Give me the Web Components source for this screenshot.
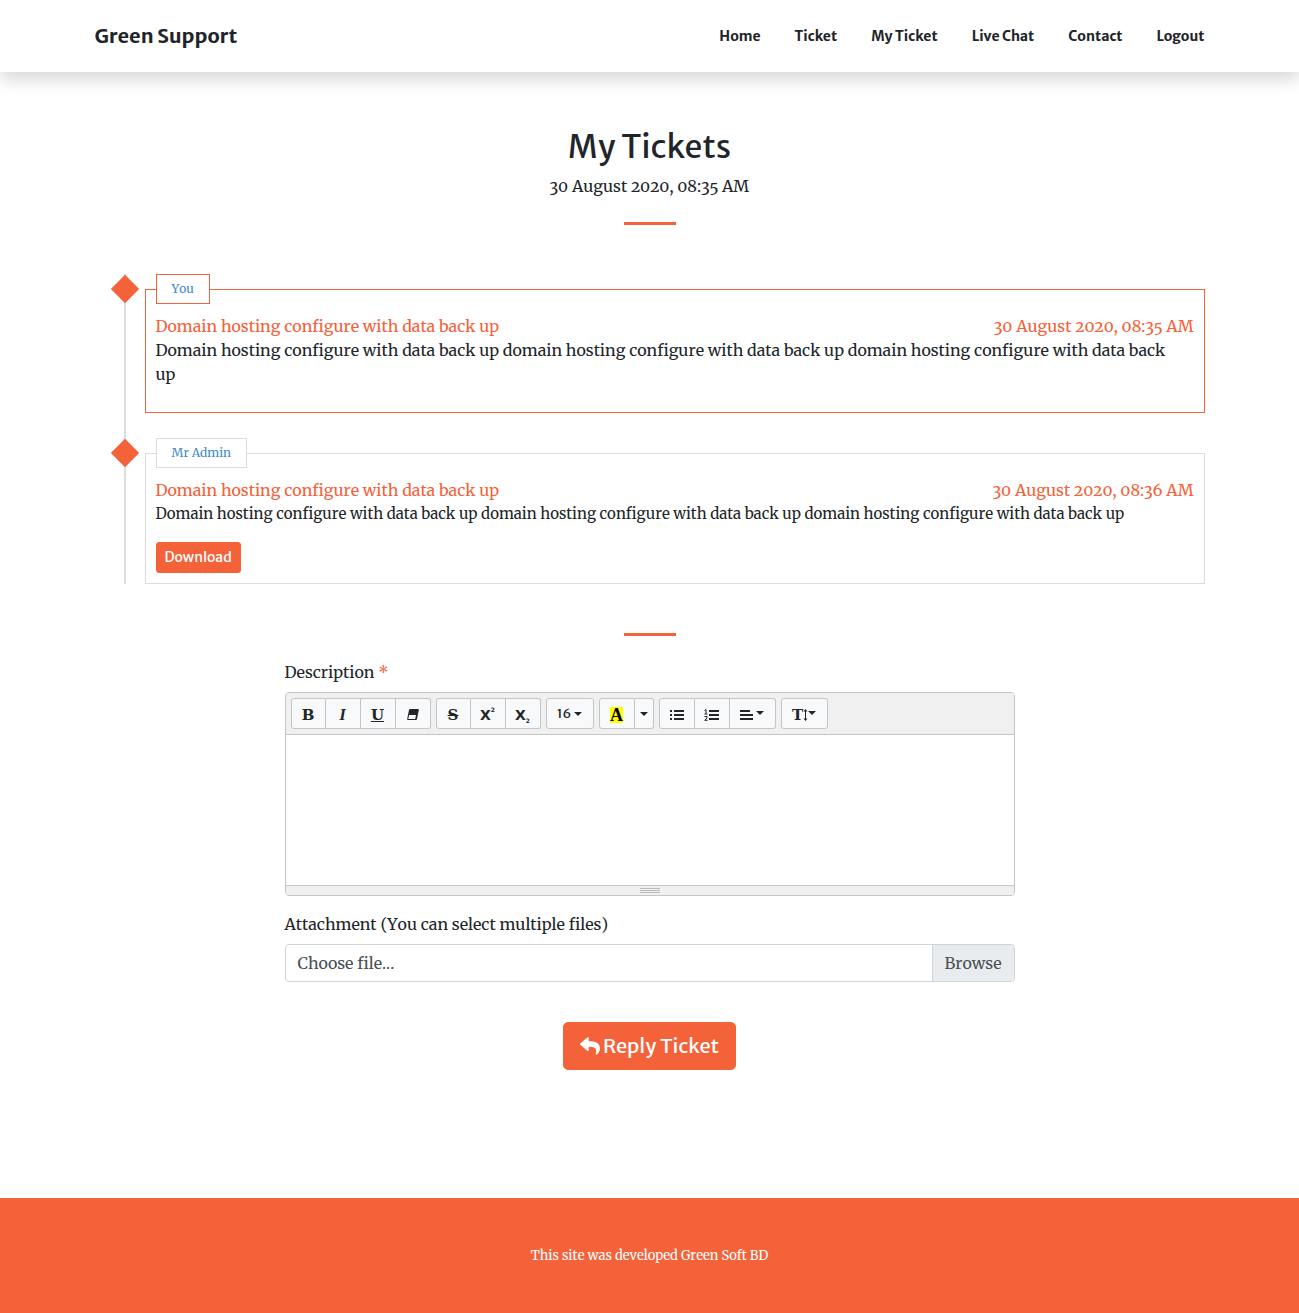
<!DOCTYPE html>
<html lang="en">
<head>
<meta charset="utf-8">
<meta name="viewport" content="width=device-width, initial-scale=1">
<title>My Tickets - Green Support</title>
<style>
:root{--accent:#f4623a;--ink:#212529;--line:#ddd;
--serif:Merriweather,"DejaVu Serif Condensed","DejaVu Serif",serif;
--sans:"Merriweather Sans","Noto Sans",sans-serif}
*{box-sizing:border-box}
body{margin:0;min-height:100vh;display:flex;flex-direction:column;background:#fff;color:var(--ink);font:16px/24px var(--serif);font-variant-numeric:oldstyle-nums;font-kerning:none}
main{flex:1;width:100%;max-width:1140px;margin:0 auto;padding:56px 15px 128px;display:flex;flex-direction:column}
</style>
</head>
<body>
<site-nav></site-nav>
<main>
  <page-heading><span slot="title">My Tickets</span>30 August 2020, 08:35 AM</page-heading>
  <accent-rule></accent-rule>
  <ticket-timeline>
    <ticket-message class="own">
      <span slot="author">You</span>
      <span slot="subject">Domain hosting configure with data back up</span>
      <span slot="date">30 August 2020, 08:35 AM</span>
      Domain hosting configure with data back up domain hosting configure with data back up domain hosting configure with data back up
    </ticket-message>
    <ticket-message class="small" download>
      <span slot="author">Mr Admin</span>
      <span slot="subject">Domain hosting configure with data back up</span>
      <span slot="date">30 August 2020, 08:36 AM</span>
      Domain hosting configure with data back up domain hosting configure with data back up domain hosting configure with data back up
    </ticket-message>
  </ticket-timeline>
  <accent-rule></accent-rule>
  <reply-form></reply-form>
</main>
<site-footer>This site was developed Green Soft BD</site-footer>
<script>
const define = (name, html, setup) => customElements.define(name, class extends HTMLElement {
  constructor() {
    super();
    this.attachShadow({mode: 'open'}).innerHTML = '<style>*{box-sizing:border-box}</style>' + html;
  }
  connectedCallback() { if (setup) setup(this, this.shadowRoot); }
});

define('site-nav', `<style>
:host{display:block;background:#fff;box-shadow:0 8px 16px rgba(0,0,0,.15);font-family:var(--sans);font-weight:700;font-kerning:auto}
nav{max-width:1140px;margin:0 auto;padding:0 15px;min-height:72px;display:flex;align-items:center;justify-content:space-between;gap:24px}
ul{display:flex;flex-wrap:wrap;gap:0 34px;list-style:none;margin:0;padding:0;font-size:14px}
a{color:var(--ink);text-decoration:none}
.brand{font-size:20px}
</style>
<nav><a class="brand" href="#">Green Support</a>
<ul><li><a href="#">Home</a></li><li><a href="#">Ticket</a></li><li><a href="#">My Ticket</a></li><li><a href="#">Live Chat</a></li><li><a href="#">Contact</a></li><li><a href="#">Logout</a></li></ul></nav>`);

define('page-heading', `<style>
:host{display:block;text-align:center}
h2{margin:0 0 8px;font:400 32px/38px var(--sans);font-kerning:auto}
p{margin:0}
</style><h2><slot name="title"></slot></h2><p><slot></slot></p>`);

define('accent-rule', `<style>
:host{display:block;margin:24px 0}
hr{width:52px;height:3px;border:0;margin:0 auto;background:var(--accent)}
</style><hr>`);

define('ticket-timeline', `<style>
:host{display:flex;flex-direction:column;gap:25px;margin:25px 0;background:linear-gradient(var(--line),var(--line)) 29px 0/2px 100% no-repeat}
</style><slot></slot>`);

define('ticket-message', `<style>
:host{display:grid;grid-template-columns:50px minmax(0,1fr);--edge:var(--line)}
:host(.own){--edge:var(--accent)}
.rail{height:30px;padding-left:10px;display:grid;place-items:center}
.rail i{width:20px;height:20px;background:var(--accent);transform:rotate(45deg)}
fieldset{min-width:0;margin:0;padding:10px;border:1px solid var(--edge)}
legend{padding:0 15px;border:1px solid var(--edge);background:#fff;color:#428bca;font-size:12px;line-height:28px}
header{display:flex;flex-wrap:wrap;justify-content:space-between;column-gap:20px;color:var(--accent)}
p{margin:0 0 16px;padding-right:10px}
:host(.small) p{font-size:15px}
button{display:block;height:31px;padding:0 8px 2px;border:1px solid var(--accent);border-radius:3px;background:var(--accent);color:#fff;font:14px/20px var(--sans)}
:host(:not([download])) button{display:none}
</style>
<div class="rail"><i></i></div>
<fieldset><legend><slot name="author"></slot></legend>
<header><slot name="subject"></slot><slot name="date"></slot></header>
<p><slot></slot></p><button type="button">Download</button></fieldset>`);

const caret = '<svg class="caret" width="8" height="4" viewBox="0 0 8 4"><path d="M0 0h8L4 4z"/></svg>';
define('rich-editor', `<style>
:host{display:block;border:1px solid #c5c5c5;border-radius:4px;overflow:hidden}
.bar{display:flex;flex-wrap:wrap;gap:5px;padding:5px;background:#f0f0f0;border-bottom:1px solid #c5c5c5}
.group{display:flex}
button{display:flex;align-items:center;justify-content:center;gap:3px;width:35px;height:31px;margin:0;padding:2px 0 0;border:1px solid #c5c5c5;border-left-width:0;background:#f8f9fa;color:var(--ink);font:700 15px/20px "DejaVu Serif",serif}
button:first-child{border-left-width:1px;border-radius:3px 0 0 3px}
button:last-child{border-radius:0 3px 3px 0}
button:only-child{border-radius:3px}
.group .first{width:36px}.group .drop{width:19px;padding:0}.group .wide{width:46px}
.group .tall{width:47px;gap:0}
.group .size{width:48px;padding:0;font:13px/20px var(--sans)}
em{font:italic 700 17px/20px "Liberation Serif",serif}
svg{fill:currentColor;display:block}
.x{font:700 14px/16px "DejaVu Sans",sans-serif;gap:0}
.x small{font-size:6px;line-height:8px;align-self:flex-start;padding-top:5px}
.x small.sub{align-self:flex-end;padding:0 0 3px}
.mark{background:#ff0;color:#000;font:700 18px/16px "Liberation Serif",serif}
.wide .caret,.tall .caret{margin-bottom:4px}
textarea{display:block;width:100%;height:150px;border:0;padding:10px;resize:none;outline:0;background:#fff;font:inherit}
.grip{height:10px;background:#f0f0f0;border-top:1px solid #c5c5c5;display:flex;flex-direction:column;align-items:center;gap:1px;padding-top:2px}
.grip i{width:20px;height:1px;background:#bbb}
</style>
<div class="bar">
<div class="group"><button type="button">B</button><button type="button"><em>I</em></button><button type="button"><u>U</u></button>
<button type="button" aria-label="Clear formatting"><svg width="12" height="11" viewBox="0 0 12 11"><path fill-rule="evenodd" d="M3.500 0H11q1 0 .8 1L10 10q-.2 1-1.200 1H1Q0 11 .2 10L2 1Q2.300 0 3.500 0zM2.100 6L1.300 10h6.900L9 6z"/></svg></button></div>
<div class="group"><button type="button"><s>S</s></button><button type="button" class="x">X<small>2</small></button><button type="button" class="x">X<small class="sub">2</small></button></div>
<div class="group"><button type="button" class="size">16 ${caret}</button></div>
<div class="group"><button type="button" class="first"><span class="mark">A</span></button><button type="button" class="drop" aria-label="More colors">${caret}</button></div>
<div class="group"><button type="button" class="first" aria-label="Unordered list"><svg width="14" height="12" viewBox="0 0 14 12"><path d="M0 1h2v2H0zM4 1h10v2H4zM0 5h2v2H0zM4 5h10v2H4zM0 9h2v2H0zM4 9h10v2H4z"/></svg></button>
<button type="button" aria-label="Ordered list"><svg width="15" height="12" viewBox="0 0 15 12"><path d="M5 1h10v2H5zM5 5h10v2H5zM5 9h10v2H5z"/><path d="M.5 1.500L2 .5V5M.5 5h3M.5 7.500h2.500v1.500L.7 11.300h3" fill="none" stroke="currentColor"/></svg></button>
<button type="button" class="wide" aria-label="Paragraph"><svg width="13" height="10" viewBox="0 0 13 10"><path d="M0 0h10v2H0zM0 4h13v2H0zM0 8h13v2H0z"/></svg>${caret}</button></div>
<div class="group"><button type="button" class="tall">T<svg width="5" height="12" viewBox="0 0 5 12"><path d="M2 2h1v8H2zM.5 2.500L2.500 0 4.500 2.500zM.5 9.500h4L2.500 12z"/></svg>${caret}</button></div>
</div>
<textarea aria-label="Description"></textarea>
<div class="grip"><i></i><i></i><i></i></div>`);

define('file-picker', `<style>
:host{display:block}
.caption{display:block;margin-bottom:8px}
.box{position:relative;display:flex;height:38px;border:1px solid #ced4da;border-radius:4px;color:#495057;line-height:36px;overflow:hidden}
.name{flex:1;padding:0 12px}
.browse{padding:0 12px;background:#e9ecef;border-left:1px solid #ced4da}
input{position:absolute;inset:0;width:100%;opacity:0}
</style>
<label class="caption" for="file">Attachment (You can select multiple files)</label>
<div class="box"><span class="name">Choose file...</span><span class="browse">Browse</span><input id="file" type="file" multiple></div>`,
(el, root) => {
  const input = root.querySelector('input');
  input.onchange = () => root.querySelector('.name').textContent = [...input.files].map(f => f.name).join(', ') || 'Choose file...';
});

define('reply-form', `<style>
:host{display:block;width:100%;max-width:730px;margin:0 auto}
form{display:flex;flex-direction:column}
.field{margin-bottom:8px}
.field b{font-weight:400;color:var(--accent)}
rich-editor{margin-bottom:16px}
.submit{align-self:center;display:flex;align-items:center;gap:3px;height:48px;margin-top:40px;padding:0 16px;border:1px solid var(--accent);border-radius:5px;background:var(--accent);color:#fff;font:20px/30px var(--sans)}
svg{fill:currentColor}
</style>
<form><label class="field">Description <b>*</b></label><rich-editor></rich-editor><file-picker></file-picker>
<button class="submit" type="button"><svg width="20" height="20" viewBox="0 0 512 512"><path d="M8.300 189.800L184.300 37.900c15.400-13.300 39.700-2.500 39.700 18.100v80.100c160.600 1.800 288 34 288 186.300 0 61.400-39.600 122.300-83.300 154.100-13.700 9.900-33.100-2.500-28.100-18.600 45.300-145.100-21.500-183.600-176.600-185.800V360c0 20.700-24.300 31.500-39.700 18.200l-176-152c-11.100-9.600-11.100-26.800 0-36.400z"/></svg>Reply Ticket</button></form>`,
(el, root) => { root.querySelector('.field').onclick = () => root.querySelector('rich-editor').shadowRoot.querySelector('textarea').focus(); });

define('site-footer', `<style>
:host{display:block;padding:48px 15px;background:var(--accent);color:#fff;text-align:center;font-size:13px;line-height:19px}
</style><slot></slot>`);
</script>
</body>
</html>
